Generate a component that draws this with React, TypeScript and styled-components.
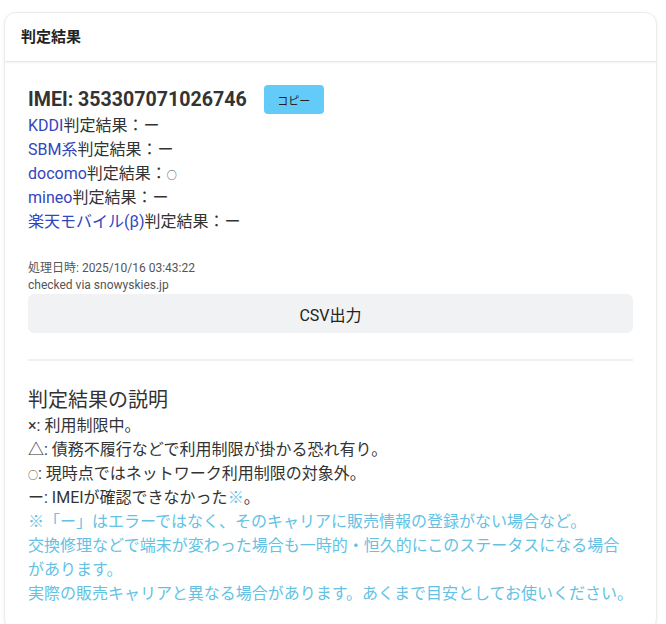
import React from "react";
import styled, { createGlobalStyle } from "styled-components";

const carriers = [
  { name: "KDDI", result: "ー" },
  { name: "SBM系", result: "ー" },
  { name: "docomo", result: "○" },
  { name: "mineo", result: "ー" },
  { name: "楽天モバイル(β)", result: "ー" },
];

const GlobalStyle = createGlobalStyle`
  body {
    margin: 0;
    background: #ffffff;
    font-family: Roboto, "Noto Sans CJK JP", sans-serif;
    color: #333333;
  }
`;

const Page = styled.div`
  padding: 12px 9px 0 4px;
`;

const Card = styled.div`
  background: #ffffff;
  border: 1px solid #ececec;
  border-radius: 12px;
  box-shadow: 0 1px 4px rgba(0, 0, 0, 0.06);
  overflow: hidden;
`;

const CardHeader = styled.div`
  padding: 14px 16px 13px;
  font-size: 15px;
  line-height: 21px;
  font-weight: 700;
  color: #222222;
  border-bottom: 1px solid #e6e6e6;
  box-shadow: 0 1px 2px rgba(0, 0, 0, 0.05);
`;

const CardBody = styled.div`
  padding: 23px 23px 24px;
`;

const ImeiRow = styled.div`
  display: flex;
  align-items: center;
  gap: 17px;
  height: 29px;
`;

const Imei = styled.span`
  font-size: 19.6px;
  font-weight: 700;
  color: #333333;
`;

const CopyButton = styled.button`
  height: 29px;
  width: 60px;
  border: none;
  border-radius: 4px;
  background: #62cbf7;
  color: #222222;
  font-family: Roboto, "Noto Sans CJK JP", sans-serif;
  font-size: 11px;
  padding: 0;
`;

const ResultList = styled.div`
  font-size: 16px;
  line-height: 24px;
  color: #333333;
`;

const CarrierName = styled.span`
  color: #3345bd;
`;

const Mark = styled.span<{ $small?: boolean }>`
  font-size: ${({ $small }) => ($small ? "10px" : "inherit")};
  line-height: 1;
`;

const Meta = styled.div`
  margin-top: 26px;
  font-size: 12px;
  line-height: 17px;
  color: #555555;
`;

const CsvButton = styled.button`
  display: block;
  width: 100%;
  height: 39px;
  border: none;
  border-radius: 6px;
  background: #f1f2f4;
  color: #222222;
  font-family: Roboto, "Noto Sans CJK JP", sans-serif;
  font-size: 16px;
`;

const Divider = styled.hr`
  margin: 26px 0 0;
  border: none;
  border-top: 2px solid #f0f0f0;
`;

const SectionTitle = styled.div`
  margin-top: 25px;
  font-size: 20px;
  line-height: 28px;
  color: #333333;
`;

const Explain = styled.div`
  font-size: 16px;
  line-height: 24px;
  color: #333333;
`;

const Info = styled.span`
  color: #63c2e4;
`;

const InfoBlock = styled.div`
  font-size: 16px;
  line-height: 24px;
  color: #63c2e4;
`;

const InfoLine = styled.div<{ $nowrap?: boolean }>`
  white-space: ${({ $nowrap }) => ($nowrap ? "nowrap" : "normal")};
`;

export default function App() {
  return (
    <Page>
      <GlobalStyle />
      <Card>
        <CardHeader>判定結果</CardHeader>
        <CardBody>
          <ImeiRow>
            <Imei>IMEI: 353307071026746</Imei>
            <CopyButton>コピー</CopyButton>
          </ImeiRow>
          <ResultList>
            {carriers.map((c) => (
              <div key={c.name}>
                <CarrierName>{c.name}</CarrierName>判定結果：
                <Mark $small={c.result === "○"}>{c.result}</Mark>
              </div>
            ))}
          </ResultList>
          <Meta>
            <div>処理日時: 2025/10/16 03:43:22</div>
            <div>checked via snowyskies.jp</div>
          </Meta>
          <CsvButton>CSV出力</CsvButton>
          <Divider />
          <SectionTitle>判定結果の説明</SectionTitle>
          <Explain>
            <div>×: 利用制限中。</div>
            <div>△: 債務不履行などで利用制限が掛かる恐れ有り。</div>
            <div>
              <Mark $small>○</Mark>: 現時点ではネットワーク利用制限の対象外。
            </div>
            <div>
              ー: IMEIが確認できなかった<Info>※</Info>。
            </div>
          </Explain>
          <InfoBlock>
            <InfoLine>※「ー」はエラーではなく、そのキャリアに販売情報の登録がない場合など。</InfoLine>
            <InfoLine>交換修理などで端末が変わった場合も一時的・恒久的にこのステータスになる場合があります。</InfoLine>
            <InfoLine $nowrap>実際の販売キャリアと異なる場合があります。あくまで目安としてお使いください。</InfoLine>
          </InfoBlock>
        </CardBody>
      </Card>
    </Page>
  );
}
